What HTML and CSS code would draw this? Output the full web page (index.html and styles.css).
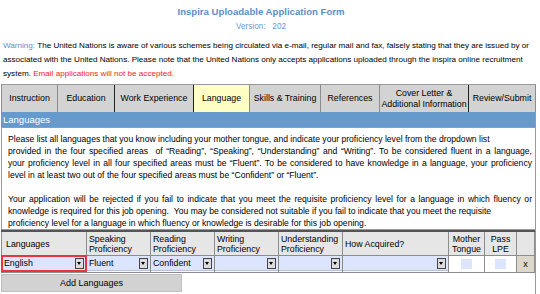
FILE: index.html
```html
<!DOCTYPE html>
<html lang="en">
  <head>
    <meta charset="UTF-8" />
    <meta name="viewport" content="width=device-width, initial-scale=1.0" />
    <title>Inspira Uploadable Application Form</title>
    <link rel="stylesheet" href="styles.css">
  </head>
  <body>
    <div class="page">
      <div class="form-title">Inspira Uploadable Application Form</div>
      <div class="form-version">Version: &nbsp;&nbsp;202</div>

      <p class="warning">
        <span class="warning-label">Warning:</span> The United Nations is aware of various schemes being circulated via e-mail, regular mail and fax, falsely stating that they are issued by or<br />
        associated with the United Nations. Please note that the United Nations only accepts applications uploaded through the inspira online recruitment<br />
        system. <span class="warning-red">Email applications will not be accepted.</span>
      </p>

      <div class="tabs-container">
        <div class="tab tab-instruction">Instruction</div>
        <div class="tab tab-education">Education</div>
        <div class="tab tab-work">Work Experience</div>
        <div class="tab tab-language tab-active">Language</div>
        <div class="tab tab-skills">Skills &amp; Training</div>
        <div class="tab tab-references">References</div>
        <div class="tab tab-cover">Cover Letter &amp;<br />Additional Information</div>
        <div class="tab tab-review">Review/Submit</div>
      </div>

      <div class="section">
        <div class="section-header">Languages</div>
        <div class="section-intro">
          <p>
            <span class="line">Please list all languages that you know including your mother tongue, and indicate your proficiency level from the dropdown list</span>
            <span class="line line-full">provided in the four specified areas &nbsp;of “Reading”, “Speaking”, “Understanding” and “Writing”. To be considered fluent in a language,</span>
            <span class="line line-full">your proficiency level in all four specified areas must be “Fluent”. To be considered to have knowledge in a language, your proficiency</span>
            <span class="line">level in at least two out of the four specified areas must be “Confident” or “Fluent”.</span>
          </p>
          <p>
            <span class="line line-full">Your application will be rejected if you fail to indicate that you meet the requisite proficiency level for a language in which fluency or</span>
            <span class="line">knowledge is required for this job opening. &nbsp;You may be considered not suitable if you fail to indicate that you meet the requisite</span>
            <span class="line">proficiency level for a language in which fluency or knowledge is desirable for this job opening.</span>
          </p>
        </div>

        <table class="lang-table">
          <thead>
            <tr>
              <th class="col-lang">Languages</th>
              <th class="col-prof">Speaking Proficiency</th>
              <th class="col-prof">Reading Proficiency</th>
              <th class="col-prof">Writing Proficiency</th>
              <th class="col-prof">Understanding Proficiency</th>
              <th class="col-how">How Acquired?</th>
              <th class="col-check center">Mother Tongue</th>
              <th class="col-pass center">Pass LPE</th>
              <th class="col-x"></th>
            </tr>
          </thead>
          <tbody>
            <tr>
              <td><div class="dropdown dropdown-error"><span>English</span><i class="arrow"></i></div></td>
              <td><div class="dropdown"><span>Fluent</span><i class="arrow"></i></div></td>
              <td><div class="dropdown"><span>Confident</span><i class="arrow"></i></div></td>
              <td><div class="dropdown"><span></span><i class="arrow"></i></div></td>
              <td><div class="dropdown"><span></span><i class="arrow"></i></div></td>
              <td><div class="dropdown"><span></span><i class="arrow"></i></div></td>
              <td class="center"><span class="checkbox"></span></td>
              <td class="center"><span class="checkbox"></span></td>
              <td class="cell-x"><span class="remove-btn">x</span></td>
            </tr>
          </tbody>
        </table>

        <div class="add-row">
          <div class="add-btn">Add Languages</div>
        </div>
      </div>
    </div>
  </body>
</html>
```

FILE: styles.css
```css
body {
  margin: 0;
  font-family: "Liberation Sans", Arial, sans-serif;
  color: #000;
  background: #fff;
  overflow: hidden;
}
.page {
  width: 536px;
  padding-top: 5px;
}
.form-title {
  text-align: center;
  font-weight: bold;
  font-size: 9.6px;
  color: #5b8fcb;
  line-height: 13px;
  padding-right: 14px;
}
.form-version {
  text-align: center;
  font-size: 8.2px;
  color: #6d9ad0;
  line-height: 12px;
  margin-top: 3px;
  padding-right: 14px;
}
.warning {
  margin: 6px 0 0 3px;
  font-size: 8.1px;
  line-height: 13.8px;
  white-space: nowrap;
}
.warning-label {
  color: #5b8fcb;
}
.warning-red {
  color: #ff2020;
}

.tabs-container {
  display: flex;
  margin-top: 4px;
  margin-left: 1px;
  height: 27px;
  border-top: 1px solid #9a9a9a;
}
.tab {
  display: flex;
  align-items: center;
  justify-content: center;
  text-align: center;
  font-size: 8.8px;
  line-height: 11px;
  background-color: #d3d3d3;
  border-right: 1px solid #8c8c8c;
  box-sizing: border-box;
}
.tab-instruction { width: 57px; border-left: 1px solid #8c8c8c; }
.tab-education { width: 57px; border-right-color: #222; }
.tab-work { width: 79px; border-right-color: #222; }
.tab-language { width: 56px; }
.tab-skills { width: 71px; }
.tab-references { width: 59px; }
.tab-cover { width: 89px; border-right-color: #222; }
.tab-review { width: 67px; }
.tab-active {
  background-color: #ffffc4;
}

.section {
  margin-left: 1px;
  border-right: 1px solid #999;
}
.section-header {
  background-color: #6699cc;
  color: #fff;
  font-size: 9.5px;
  line-height: 15px;
  padding-left: 2px;
}
.section-intro {
  border: 1px solid #9a9a9a;
  border-right: none;
  padding: 5px 0 0 6px;
  font-size: 8.6px;
  line-height: 12px;
  white-space: nowrap;
}
.section-intro p {
  margin: 0 0 12px 0;
  width: 524px;
}
.section-intro p:last-child {
  margin-bottom: 0;
}
.line {
  display: block;
}
.line-full {
  text-align: justify;
  text-align-last: justify;
}

.lang-table {
  width: 100%;
  border-collapse: collapse;
  font-size: 8.8px;
}
.lang-table th {
  background-color: #e6e6e6;
  font-weight: normal;
  text-align: left;
  line-height: 10px;
  height: 24px;
  padding: 0 2px;
  border: 1px solid #8c8c8c;
  border-top: 2px solid #555;
  box-sizing: border-box;
}
.lang-table th.center {
  text-align: center;
}
.col-lang { width: 85px; padding-left: 4px !important; }
.col-prof { width: 64px; }
.col-how { width: 106px; }
.col-check { width: 36px; }
.col-pass { width: 32px; }
.col-x { width: 18px; }

.lang-table td {
  padding: 0;
  height: 16px;
  border: 1px solid #8c8c8c;
  border-top: none;
  border-bottom: none;
}
.lang-table td.center {
  text-align: center;
}
.dropdown {
  display: flex;
  align-items: center;
  height: 15px;
  background-color: #dde4fd;
  border-bottom: 1px solid #b7c0e0;
  box-sizing: border-box;
}
.dropdown span {
  flex: 1;
  padding-left: 2px;
  line-height: 13px;
}
.dropdown-error {
  outline: 2px solid #e8343f;
  outline-offset: -1px;
}
.arrow {
  width: 7px;
  height: 9px;
  margin-right: 2px;
  background: #dcdcdc;
  border: 1px solid #444;
  position: relative;
}
.arrow::after {
  content: "";
  position: absolute;
  left: 1px;
  top: 3px;
  border-left: 2.5px solid transparent;
  border-right: 2.5px solid transparent;
  border-top: 3px solid #000;
}
.checkbox {
  display: inline-block;
  width: 11px;
  height: 10px;
  background-color: #dde4fd;
  vertical-align: middle;
}
.cell-x {
  background-color: #ddd8cc;
  text-align: center;
}
.remove-btn {
  font-size: 9px;
}

.add-row {
  border-top: 1px solid #8c8c8c;
  padding-top: 1px;
  height: 30px;
}
.add-btn {
  width: 179px;
  height: 16px;
  line-height: 16px;
  text-align: center;
  background-color: #d2d2d2;
  border: 1px solid #c0c0c0;
  font-size: 9px;
}
```
